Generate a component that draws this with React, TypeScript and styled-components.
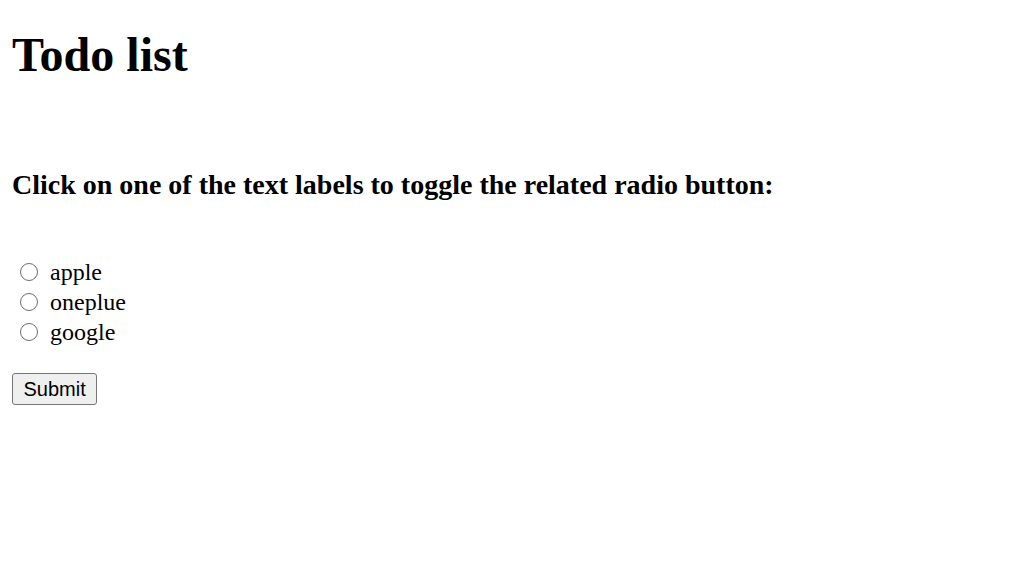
import React, { FC, useState } from 'react';
import styled, { createGlobalStyle } from 'styled-components';

const GlobalStyle = createGlobalStyle`
  html, body {
    margin: 0;
    padding: 0;
    background: #ffffff;
  }

  body {
    font-family: 'Liberation Serif', 'Times New Roman', serif;
    color: #000000;
  }
`;

const Page = styled.div`
  padding: 0 12px;
`;

const Title = styled.h1`
  margin: 27px 0 32px;
  font-size: 48px;
  font-weight: 700;
  line-height: normal;
`;

const Prompt = styled.h3`
  margin: 87px 0 0;
  font-size: 28px;
  font-weight: 700;
  line-height: normal;
`;

const Form = styled.form`
  display: flex;
  flex-direction: column;
  margin-top: 56px;
`;

const OptionRow = styled.label`
  display: flex;
  align-items: center;
  height: 30px;
  font-size: 24px;
  cursor: pointer;
`;

const Radio = styled.input`
  appearance: none;
  width: 18px;
  height: 18px;
  margin: 0 12px 0 8px;
  border: 1.5px solid #6e6e6e;
  border-radius: 50%;
  background: #ffffff;
  box-sizing: border-box;
  cursor: pointer;

  &:checked {
    border-color: #0075ff;
    background: radial-gradient(circle, #0075ff 0 45%, #ffffff 50%);
  }
`;

const SubmitButton = styled.button`
  align-self: flex-start;
  margin-top: 26px;
  padding: 2px 10.5px;
  height: 32px;
  font-family: 'Liberation Sans', Arial, sans-serif;
  font-size: 20px;
  color: #000000;
  background: #efefef;
  border: 1.5px solid #767676;
  border-radius: 3px;
`;

const options = ['apple', 'oneplue', 'google'];

const App: FC = () => {
  const [selected, setSelected] = useState<string>('');

  return (
    <>
      <GlobalStyle />
      <Page>
        <Title>Todo list</Title>
        <Prompt>Click on one of the text labels to toggle the related radio button:</Prompt>
        <Form onSubmit={(e) => e.preventDefault()}>
          {options.map((item) => (
            <OptionRow key={item}>
              <Radio
                type="radio"
                name="brand"
                value={item}
                checked={selected === item}
                onChange={() => setSelected(item)}
              />
              {item}
            </OptionRow>
          ))}
          <SubmitButton type="submit">Submit</SubmitButton>
        </Form>
      </Page>
    </>
  );
};

export default App;
